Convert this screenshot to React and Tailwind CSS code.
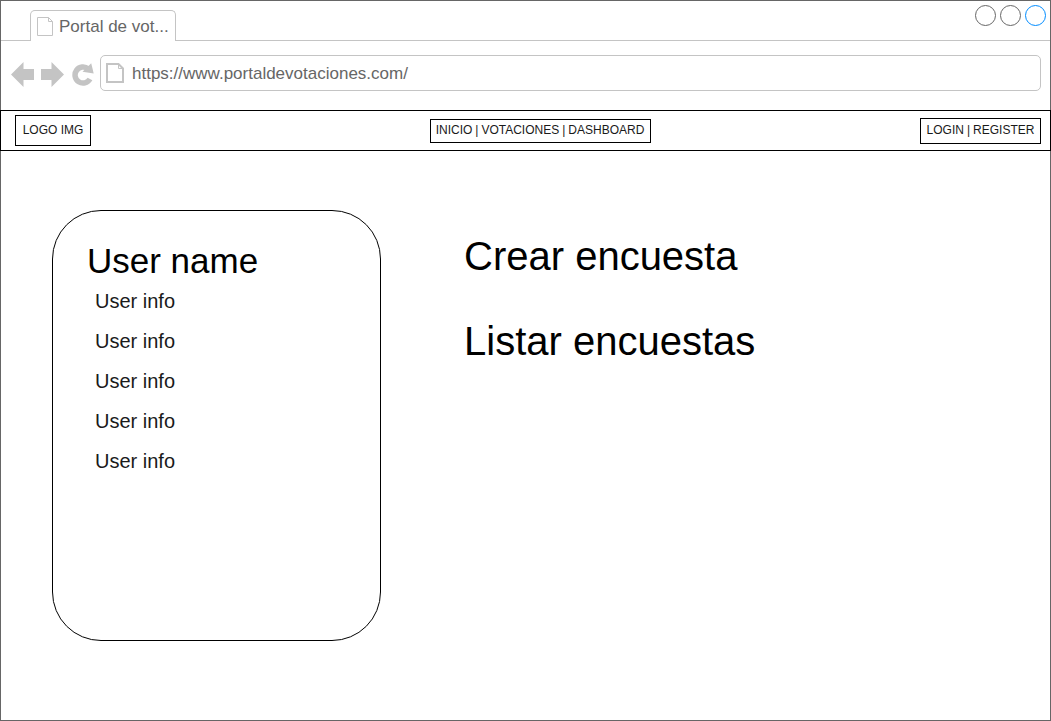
const info = ['User info', 'User info', 'User info', 'User info', 'User info'];

function TabStrip() {
  return (
    <div className="flex h-10 items-end">
      <div className="w-[29px] shrink-0 border-b border-[#c4c4c4]" />
      <div className="flex h-[31px] w-[146px] shrink-0 items-center gap-1.5 rounded-t-[5px] border border-b-0 border-[#c4c4c4] pl-1.5 text-[17px] text-[#666666]">
        <svg className="h-[19px] w-4 shrink-0" viewBox="0 0 16 19" fill="none" stroke="#c4c4c4" aria-hidden="true">
          <path d="M.5 .5H11.500L15.500 4.500V18.500H.5ZM11.500 .5V4.500H15.500" />
        </svg>
        <span className="pt-0.5 whitespace-nowrap">Portal de vot...</span>
      </div>
      <div className="flex h-full flex-1 justify-end gap-1 border-b border-[#c4c4c4] pt-1 pr-1">
        <button type="button" aria-label="Minimizar" className="size-[21px] rounded-full border border-[#666666]" />
        <button type="button" aria-label="Maximizar" className="size-[21px] rounded-full border border-[#666666]" />
        <button type="button" aria-label="Cerrar" className="size-[21px] rounded-full border border-[#008cff]" />
      </div>
    </div>
  );
}

function AddressBar() {
  return (
    <div className="flex items-center pt-3.5 pr-[9px] pb-[19px] pl-2.5">
      <div className="flex items-center pt-[3px]">
        <button type="button" aria-label="Atrás" className="mr-[7px]">
          <svg className="block h-[25px] w-[23px]" viewBox="0 0 23 25" fill="#c4c4c4" aria-hidden="true">
            <path d="M0 12.500L12.500 0V7H23V18H12.500V25Z" />
          </svg>
        </button>
        <button type="button" aria-label="Adelante" className="mr-2">
          <svg className="block h-[25px] w-[23px]" viewBox="0 0 23 25" fill="#c4c4c4" aria-hidden="true">
            <path d="M23 12.500L10.500 0V7H0V18H10.500V25Z" />
          </svg>
        </button>
        <button type="button" aria-label="Recargar" className="mr-1.5">
          <svg className="block h-[23px] w-[22px]" viewBox="0 0 22 23" aria-hidden="true">
            <path d="M16.200 5.900A8 8 0 1 0 18 16" fill="none" stroke="#c4c4c4" strokeWidth="5.5" />
            <path d="M19.200 .3L21.700 10.500L10.500 8.700Z" fill="#c4c4c4" />
          </svg>
        </button>
      </div>
      <label className="flex h-9 flex-1 items-center gap-2 rounded-[5px] border border-[#c4c4c4] pl-[5px]">
        <svg className="h-5 w-[18px] shrink-0" viewBox="0 0 18 20" fill="none" stroke="#c4c4c4" strokeWidth="2" aria-hidden="true">
          <path d="M1 1H12.500L17 5.500V19H1Z" />
          <path d="M12.500 1V5.500H17" strokeWidth="1" />
        </svg>
        <input
          type="url"
          aria-label="Dirección"
          defaultValue="https://www.portaldevotaciones.com/"
          className="min-w-0 flex-1 pt-0.5 text-[17px] text-[#666666] outline-none"
        />
      </label>
    </div>
  );
}

function SiteNav() {
  return (
    <header className="-mx-px grid h-[41px] grid-cols-[1fr_auto_1fr] items-center border border-black pr-[9px] pl-3.5 text-xs text-[#1a1a1a]">
      <a href="#logo" className="flex h-[31px] w-[76px] items-center justify-center border border-black pb-0.5">
        LOGO IMG
      </a>
      <nav className="ml-6 flex h-6 w-[221px] items-center justify-center gap-[3px] border border-black pb-0.5 whitespace-nowrap">
        <a href="#inicio">INICIO</a>|<a href="#votaciones">VOTACIONES</a>|<a href="#dashboard">DASHBOARD</a>
      </nav>
      <div className="flex h-[26px] w-[121px] items-center justify-center gap-[3px] justify-self-end border border-black pb-0.5 whitespace-nowrap">
        <a href="#login">LOGIN</a>|<a href="#register">REGISTER</a>
      </div>
    </header>
  );
}

export default function App() {
  return (
    <div className="flex min-h-screen flex-col border border-[#666666] bg-white font-['Liberation_Sans',Arial,sans-serif] text-black">
      <TabStrip />
      <AddressBar />
      <SiteNav />
      <main className="flex flex-1 items-start gap-[83px] px-[51px] pt-[59px] pb-12">
        <section className="min-h-[431px] w-[329px] shrink-0 rounded-[49px] border border-black px-[34px] pt-[30px]">
          <h1 className="text-[35px] leading-10">User name</h1>
          <ul className="pl-2 text-xl leading-10 text-[#1a1a1a]">
            {info.map((text, i) => (
              <li key={i}>{text}</li>
            ))}
          </ul>
        </section>
        <div className="flex flex-col items-start gap-[37px] pt-[22px] text-[40px] leading-12">
          <a href="#crear">Crear encuesta</a>
          <a href="#listar">Listar encuestas</a>
        </div>
      </main>
    </div>
  );
}
